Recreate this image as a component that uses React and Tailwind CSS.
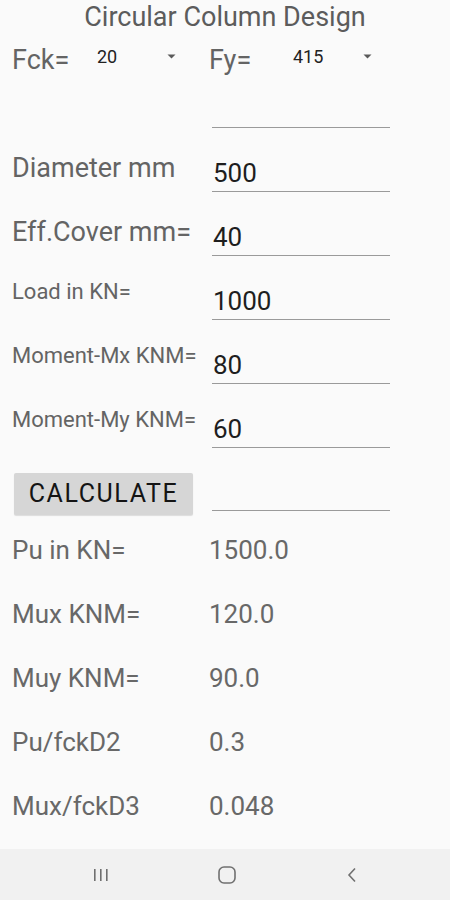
import React from 'react';

const inputRows = [
  { label: '', value: '', size: 'big' },
  { label: 'Diameter mm', value: '500', size: 'big' },
  { label: 'Eff.Cover mm=', value: '40', size: 'big' },
  { label: 'Load in KN=', value: '1000', size: 'small' },
  { label: 'Moment-Mx KNM=', value: '80', size: 'small' },
  { label: 'Moment-My KNM=', value: '60', size: 'small' },
];

const results = [
  { label: 'Pu in KN=', value: '1500.0' },
  { label: 'Mux KNM=', value: '120.0' },
  { label: 'Muy KNM=', value: '90.0' },
  { label: 'Pu/fckD2', value: '0.3' },
  { label: 'Mux/fckD3', value: '0.048' },
];

const Arrow = () => (
  <svg width="9" height="5" viewBox="0 0 9 5" className="block">
    <path d="M0.5 0.5 L8.5 0.5 L4.5 4.5 Z" fill="#5a5a5a" />
  </svg>
);

const Spinner = ({ label, value, labelW, arrowMr }) => (
  <div className="flex items-center w-[197px]">
    <span className={`text-[27px] leading-[32px] text-[#646464] ${labelW}`}>{label}</span>
    <span className="text-[18px] leading-[22px] text-[#222] -mt-[6px]">{value}</span>
    <div className={`ml-auto -mt-[7px] ${arrowMr}`}>
      <Arrow />
    </div>
  </div>
);

const App = () => {
  return (
    <div className="w-[450px] h-[900px] bg-[#fafafa] flex flex-col font-['Roboto',sans-serif]">
      {/* Title */}
      <div className="h-[36px] pt-[1px] text-center text-[27px] leading-[32px] text-[#5c5c5c]">
        Circular Column Design
      </div>

      {/* Spinners */}
      <div className="h-[41px] flex items-start pt-[8px] pl-3">
        <Spinner label="Fck=" value="20" labelW="w-[85px]" arrowMr="mr-[33px]" />
        <Spinner label="Fy=" value="415" labelW="w-[84px]" arrowMr="mr-[34px]" />
      </div>

      {/* Inputs */}
      {inputRows.map((row, i) => (
        <div key={i} className="flex h-[64px]">
          <div className="w-[212px] pl-3 whitespace-nowrap">
            {row.size === 'big' ? (
              <div className="pt-[11px] text-[27px] leading-[32px] text-[#646464]">{row.label}</div>
            ) : (
              <div className="pt-[10px] text-[22px] leading-[26px] text-[#646464]">{row.label}</div>
            )}
          </div>
          <div className="w-[178px] h-[51px] border-b-[1.5px] border-[#9a9a9a] pt-[16px] pl-[1px] text-[26px] leading-[32px] text-[#1e1e1e]">
            {row.value}
          </div>
        </div>
      ))}

      {/* Calculate */}
      <div className="flex h-[57px]">
        <div className="w-[212px] pl-[14px] pt-[12px]">
          <button className="w-[179px] h-[42px] bg-[#d6d6d6] rounded-[2px] text-[25px] leading-[30px] tracking-[1.6px] text-[#141414] shadow-[0_1px_1px_rgba(0,0,0,0.12)]">
            CALCULATE
          </button>
        </div>
        <div className="w-[178px] h-[50px] border-b-[1.5px] border-[#9a9a9a]" />
      </div>

      {/* Results */}
      {results.map((r) => (
        <div key={r.label} className="flex items-center h-[64px] text-[26px] leading-[32px] text-[#686868]">
          <div className="w-[209px] pl-3">{r.label}</div>
          <div>{r.value}</div>
        </div>
      ))}

      {/* Nav bar */}
      <div className="mt-auto h-[51px] bg-[#f1f1f1] flex items-center">
        <div className="w-[200px] flex justify-center pl-[1px]">
          <svg width="16" height="14" viewBox="0 0 16 14">
            <rect x="1" y="1" width="1.6" height="12" fill="#707070" />
            <rect x="7" y="1" width="1.6" height="12" fill="#707070" />
            <rect x="13" y="1" width="1.6" height="12" fill="#707070" />
          </svg>
        </div>
        <div className="w-[54px] flex justify-center">
          <svg width="18" height="18" viewBox="0 0 18 18">
            <rect x="1" y="1" width="16" height="16" rx="5" fill="none" stroke="#707070" strokeWidth="1.6" />
          </svg>
        </div>
        <div className="w-[196px] flex justify-center pr-[1px]">
          <svg width="10" height="16" viewBox="0 0 10 16">
            <path d="M8 1.5 L2 8 L8 14.5" fill="none" stroke="#707070" strokeWidth="1.6" />
          </svg>
        </div>
      </div>
    </div>
  );
};

export default App;
